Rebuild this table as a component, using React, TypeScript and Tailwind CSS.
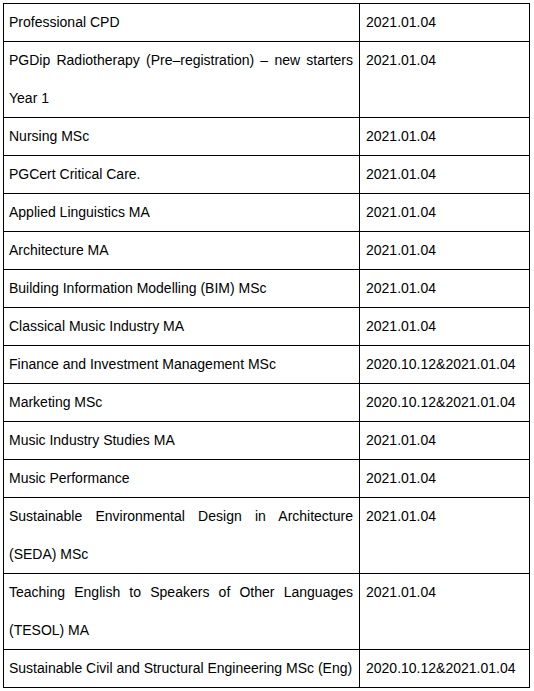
const rows = [
  { course: "Professional CPD", date: "2021.01.04" },
  { course: "PGDip Radiotherapy (Pre–registration) – new starters Year 1", date: "2021.01.04", tall: true },
  { course: "Nursing MSc", date: "2021.01.04" },
  { course: "PGCert Critical Care.", date: "2021.01.04" },
  { course: "Applied Linguistics MA", date: "2021.01.04" },
  { course: "Architecture MA", date: "2021.01.04" },
  { course: "Building Information Modelling (BIM) MSc", date: "2021.01.04" },
  { course: "Classical Music Industry MA", date: "2021.01.04" },
  { course: "Finance and Investment Management MSc", date: "2020.10.12&2021.01.04" },
  { course: "Marketing MSc", date: "2020.10.12&2021.01.04" },
  { course: "Music Industry Studies MA", date: "2021.01.04" },
  { course: "Music Performance", date: "2021.01.04" },
  { course: "Sustainable Environmental Design in Architecture (SEDA) MSc", date: "2021.01.04", tall: true },
  { course: "Teaching English to Speakers of Other Languages (TESOL) MA", date: "2021.01.04", tall: true },
  { course: "Sustainable Civil and Structural Engineering MSc (Eng)", date: "2020.10.12&2021.01.04" },
];

export default function App() {
  return (
    <div className="min-h-[691px] bg-white pt-[3px] pl-[3px] font-['Liberation_Sans',sans-serif] text-[14px] text-black">
      <div className="w-[527px] border border-black">
        {rows.map((r, i) => {
          const last = i === rows.length - 1;
          const h = r.tall ? "h-[76px] border-b border-black" : last ? "h-[37px]" : "h-[38px] border-b border-black";
          return (
            <div key={i} className={`grid grid-cols-[356px_1fr] ${h}`}>
              <div className="border-r border-black pl-[5px] pr-[6px] leading-[37.5px] text-justify">
                {r.course}
              </div>
              <div className="pl-[6px] leading-[37.5px] whitespace-nowrap">{r.date}</div>
            </div>
          );
        })}
      </div>
    </div>
  );
}
